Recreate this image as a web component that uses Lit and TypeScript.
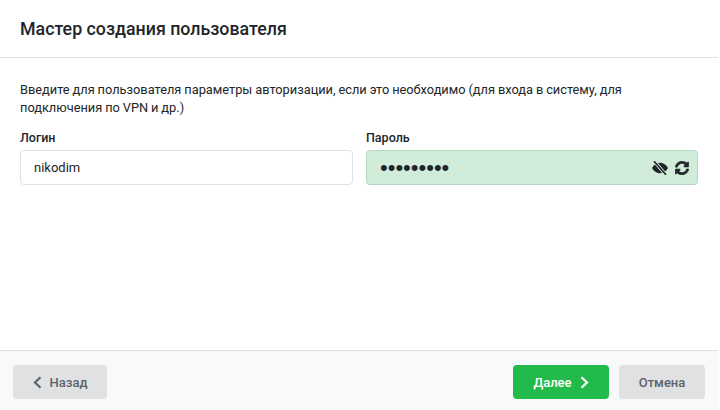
import { LitElement, html, css } from "lit";
import { customElement } from "lit/decorators.js";

@customElement("app-root")
export class AppRoot extends LitElement {
  static styles = css`
    :host {
      display: flex;
      flex-direction: column;
      width: 718px;
      height: 410px;
      background: #fff;
      color: #212529;
      font-family: Roboto, "Noto Sans", sans-serif;
      font-size: 13px;
      overflow: hidden;
    }
    .head {
      height: 58px;
      box-sizing: border-box;
      border-bottom: 1px solid #dee2e6;
      padding: 0 20px;
      display: flex;
      align-items: center;
    }
    .head h1 {
      margin: 0;
      font-size: 17.8px;
      font-weight: 500;
      color: #212529;
    }
    .body {
      flex: 1;
      padding: 23px 20px 0;
    }
    .intro {
      margin: 0 0 12px;
      line-height: 18px;
      font-size: 12.8px;
      word-spacing: -0.25px;
    }
    .fields {
      display: grid;
      grid-template-columns: 333px 332px;
      gap: 13px;
    }
    label {
      display: block;
      font-size: 12.5px;
      font-weight: 500;
      line-height: 18px;
      margin-bottom: 3px;
    }
    .input {
      height: 35px;
      box-sizing: border-box;
      border: 1px solid #dee2e6;
      border-radius: 4px;
      padding: 0 13px;
      display: flex;
      align-items: center;
      font-size: 13px;
    }
    .input.ok {
      background: #d1ecd9;
      border-color: #b4d8c0;
    }
    .dots {
      flex: 1;
      font-family: "Liberation Sans", sans-serif;
      font-size: 22px;
      line-height: 20px;
    }
    .icons {
      display: flex;
      gap: 7px;
      margin-right: -5px;
      align-items: center;
    }
    .icons svg {
      display: block;
      width: 14px;
      height: 14px;
      fill: #212529;
    }
    .icons svg.eye {
      width: 16px;
    }
    .icons .reload path {
      stroke: #212529;
      stroke-width: 24;
    }
    .eye .gap {
      stroke: #d1ecd9;
      stroke-width: 3.4;
    }
    .eye .slash {
      stroke: #212529;
      stroke-width: 1.7;
      stroke-linecap: round;
    }
    .foot {
      height: 60px;
      box-sizing: border-box;
      border-top: 1px solid #dee2e6;
      background: #f8f9fa;
      padding: 14px 13px 0;
      display: flex;
      gap: 10px;
    }
    .btn {
      height: 34px;
      box-sizing: border-box;
      border-radius: 4px;
      background: #e0e1e3;
      color: #5c636a;
      font-size: 13px;
      font-weight: 500;
      display: flex;
      align-items: center;
      justify-content: center;
      gap: 8px;
    }
    .btn svg {
      width: 9px;
      height: 13px;
      fill: none;
      stroke: currentColor;
      stroke-width: 2.2;
    }
    .back {
      width: 94px;
      margin-right: auto;
    }
    .next {
      width: 96px;
      background: #22bb4b;
      color: #fff;
    }
    .cancel {
      width: 86px;
    }
  `;

  render() {
    return html`
      <div class="head"><h1>Мастер создания пользователя</h1></div>
      <div class="body">
        <p class="intro">
          Введите для пользователя параметры авторизации, если это необходимо (для входа в систему, для
          подключения по VPN и др.)
        </p>
        <div class="fields">
          <div>
            <label>Логин</label>
            <div class="input">nikodim</div>
          </div>
          <div>
            <label>Пароль</label>
            <div class="input ok">
              <span class="dots">•••••••••</span>
              <span class="icons">
                <svg class="eye" viewBox="0 0 16 14">
                  <path d="M0 7C2.2 3.2 5 1.8 8 1.8S13.8 3.2 16 7c-2.2 3.8-5 5.2-8 5.2S2.2 10.800 0 7Z" />
                  <line class="gap" x1="2" y1="0" x2="14" y2="14" />
                  <line class="slash" x1="2.5" y1="0.800" x2="13.500" y2="13.200" />
                </svg>
                <svg class="reload" viewBox="0 0 512 512">
                  <path d="M370.72 133.28C339.458 104.008 298.888 87.962 255.848 88c-77.458.068-144.328 53.178-162.791 126.85-1.344 5.363-6.122 9.15-11.651 9.15H24.103c-7.498 0-13.194-6.807-11.807-14.176C33.933 94.924 134.813 8 256 8c66.448 0 126.791 26.136 171.315 68.685L463.03 40.97C478.149 25.851 504 36.559 504 57.941V192c0 13.255-10.745 24-24 24H345.941c-21.382 0-32.09-25.851-16.971-40.971l41.75-41.749zM32 296h134.059c21.382 0 32.09 25.851 16.971 40.971l-41.75 41.75c31.262 29.273 71.835 45.319 114.876 45.28 77.418-.07 144.315-53.144 162.787-126.849 1.344-5.363 6.122-9.15 11.651-9.15h57.304c7.498 0 13.194 6.807 11.807 14.176C478.067 417.076 377.187 504 256 504c-66.448 0-126.791-26.136-171.315-68.685L48.97 471.03C33.851 486.149 8 475.441 8 454.059V320c0-13.255 10.745-24 24-24z"/>
                </svg>
              </span>
            </div>
          </div>
        </div>
      </div>
      <div class="foot">
        <div class="btn back">
          <svg viewBox="0 0 9 13"><path d="M7.5 1.2 2 6.5l5.5 5.3" /></svg>
          Назад
        </div>
        <div class="btn next">
          Далее
          <svg viewBox="0 0 9 13"><path d="M1.5 1.2 7 6.5l-5.5 5.3" /></svg>
        </div>
        <div class="btn cancel">Отмена</div>
      </div>
    `;
  }
}
